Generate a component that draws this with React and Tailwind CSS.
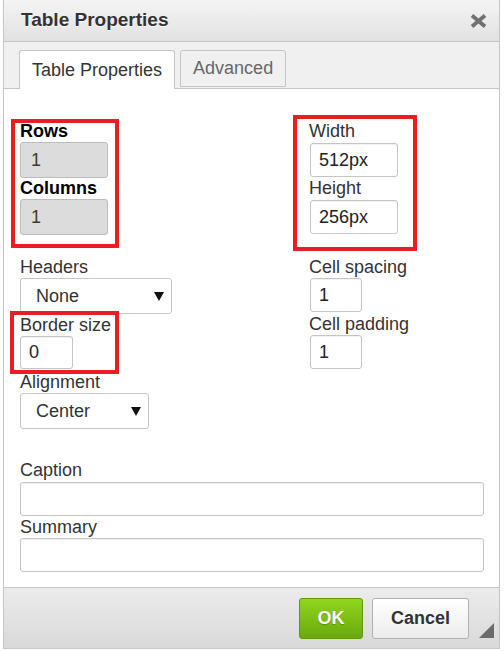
const font = "font-['Liberation_Sans',Arial,sans-serif]";

function Label({ children, bold, className = "" }) {
  return (
    <div
      className={`h-[21px] leading-[21px] text-[18px] text-[#333] whitespace-nowrap ${
        bold ? "font-bold text-black" : ""
      } ${className}`}
    >
      {children}
    </div>
  );
}

function TextBox({ value, w, h = "h-[34px]", disabled, className = "" }) {
  return (
    <div
      className={`${w} ${h} flex items-center rounded-[3px] border text-[18px] ${
        disabled
          ? "bg-[#dcdcdc] border-[#bcbcbc] text-[#3a3a3a] pl-[10px]"
          : "bg-white border-[#c5c5c5] text-[#222] pl-[8px] shadow-[inset_0_1px_1px_rgba(0,0,0,0.06)]"
      } ${className}`}
    >
      {value}
    </div>
  );
}

function ListBox({ value, w }) {
  return (
    <div
      className={`${w} h-[36px] flex items-center justify-between rounded-[3px] border border-[#c5c5c5] bg-white pl-[15px] pr-[7px] text-[18px] text-[#333]`}
    >
      <span>{value}</span>
      <svg width="10" height="9" viewBox="0 0 10 9">
        <path d="M0 0 L10 0 L5 9 Z" fill="#111" />
      </svg>
    </div>
  );
}

function RedBox({ className }) {
  return (
    <div
      className={`absolute border-[4px] border-[#ec1c24] pointer-events-none ${className}`}
    />
  );
}

export default function App() {
  return (
    <div className={`relative w-[504px] h-[651px] bg-white ${font}`}>
      <div className="pl-[3px]">
        <div className="w-[497px] border border-t-0 border-[#c5c5c5] bg-white">
          {/* Title bar */}
          <div className="h-[42px] flex items-center justify-between pl-[17px] pr-[12px] border-b border-[#c5c5c5] bg-gradient-to-b from-[#f4f4f4] to-[#e2e2e2]">
            <span className="text-[19px] font-bold text-[#333] [text-shadow:0_1px_1px_rgba(255,255,255,0.8)]">
              Table Properties
            </span>
            <svg width="17" height="14" viewBox="0 0 17 14">
              <path
                d="M2 1.5 L15 12.5 M15 1.5 L2 12.5"
                stroke="#707070"
                strokeWidth="3.8"
              />
            </svg>
          </div>

          {/* Tabs */}
          <div className="h-[47px] flex items-start gap-[5px] pt-[8px] pl-[15px] bg-[#f0f0f0] border-b border-[#c5c5c5]">
            <div className="h-[39px] -mb-px px-[12px] flex items-center bg-white border border-b-0 border-[#c5c5c5] rounded-t-[3px] text-[18px] text-[#333]">
              Table Properties
            </div>
            <div className="h-[37px] px-[12px] flex items-center bg-[#f0f0f0] border border-[#c5c5c5] rounded-t-[3px] text-[18px] text-[#666]">
              Advanced
            </div>
          </div>

          {/* Body */}
          <div className="pt-[32px] pl-[16px] pr-[14px] pb-[15px]">
            <div className="grid grid-cols-[290px_1fr]">
              <div className="flex flex-col">
                <Label bold>Rows</Label>
                <TextBox value="1" w="w-[88px]" h="h-[36px]" disabled />
                <Label bold>Columns</Label>
                <TextBox value="1" w="w-[88px]" h="h-[36px]" disabled />
                <Label className="mt-[22px]">Headers</Label>
                <ListBox value="None" w="w-[152px]" />
                <Label className="mt-[1px]">Border size</Label>
                <TextBox value="0" w="w-[53px]" h="h-[33px]" />
                <Label className="mt-[3px]">Alignment</Label>
                <ListBox value="Center" w="w-[129px]" />
              </div>
              <div className="flex flex-col">
                <Label className="h-[22px] -ml-px">Width</Label>
                <TextBox value="512px" w="w-[88px]" />
                <Label className="h-[22px] mt-[1px] -ml-px">Height</Label>
                <TextBox value="256px" w="w-[88px]" />
                <Label className="mt-[23px] -ml-px">Cell spacing</Label>
                <TextBox value="1" w="w-[52px]" />
                <Label className="mt-[2px] -ml-px">Cell padding</Label>
                <TextBox value="1" w="w-[52px]" />
              </div>
            </div>
            <Label className="mt-[31px]">Caption</Label>
            <TextBox value="" w="w-[464px]" className="mt-px" />
            <Label className="mt-[1px]">Summary</Label>
            <TextBox value="" w="w-[464px]" />
          </div>

          {/* Footer */}
          <div className="relative h-[61px] flex items-center justify-end gap-[9px] pr-[30px] border-t border-[#c5c5c5] bg-gradient-to-b from-[#ececec] to-[#d9d9d9]">
            <button className="w-[64px] h-[41px] rounded-[3px] border border-[#5e9a0f] bg-gradient-to-b from-[#92d51e] to-[#69aa0c] text-[18px] font-bold text-white [text-shadow:0_1px_1px_rgba(0,0,0,0.25)]">
              OK
            </button>
            <button className="w-[97px] h-[41px] rounded-[3px] border border-[#b1b1b1] bg-gradient-to-b from-[#ffffff] to-[#ececec] text-[18px] font-bold text-[#333]">
              Cancel
            </button>
            <svg
              className="absolute right-[5px] bottom-[10px]"
              width="15"
              height="15"
              viewBox="0 0 15 15"
            >
              <path d="M15 0 L15 15 L0 15 Z" fill="#6b6b6b" />
            </svg>
          </div>
        </div>
      </div>

      {/* Annotation overlays */}
      <RedBox className="left-[11px] top-[119px] w-[108px] h-[129px]" />
      <RedBox className="left-[293px] top-[115px] w-[124px] h-[136px]" />
      <RedBox className="left-[10px] top-[311px] w-[109px] h-[63px]" />
    </div>
  );
}
